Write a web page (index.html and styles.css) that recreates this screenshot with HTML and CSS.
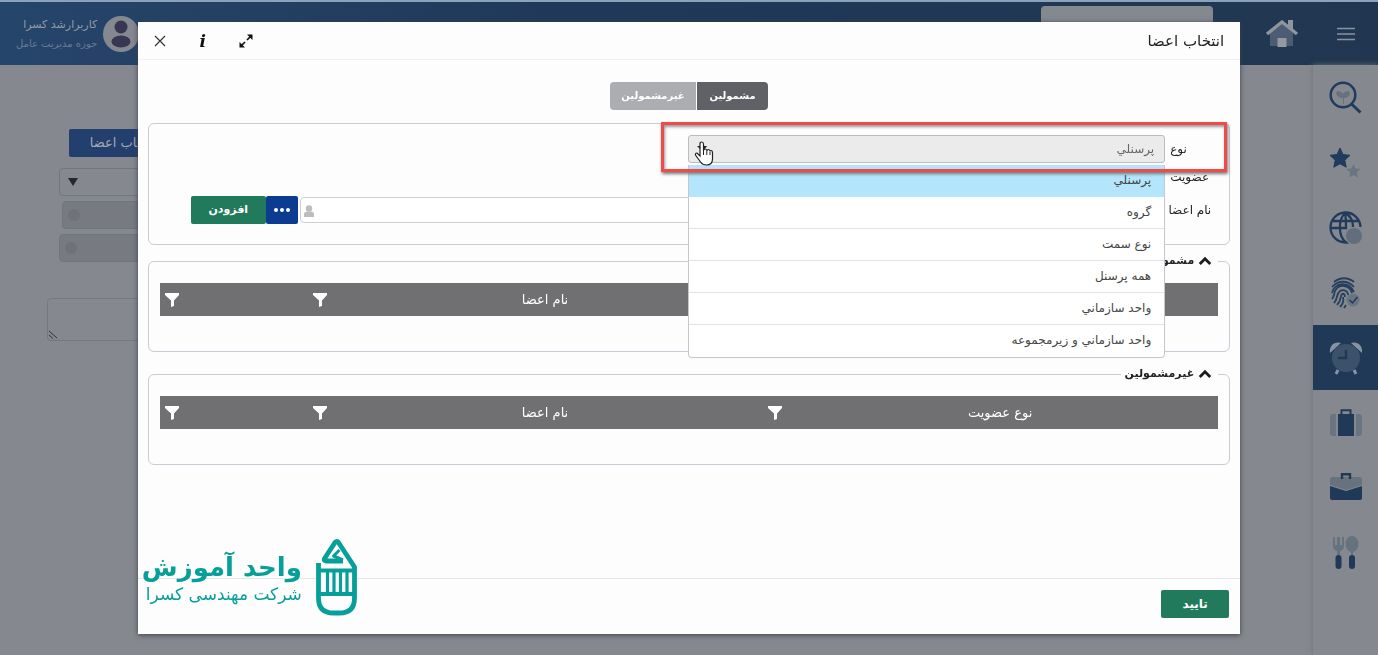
FILE: index.html
```html
<!DOCTYPE html>
<html lang="fa" dir="rtl">
<head>
<meta charset="utf-8">
<meta name="viewport" content="width=device-width, initial-scale=1">
<title>انتخاب اعضا</title>
<link rel="stylesheet" href="styles.css">
</head>
<body>
<svg class="defs" aria-hidden="true">
  <symbol id="filter" viewBox="0 0 14 14"><path d="M0 0h14v2L9 7.500V13l-3 1V7.500L0 2z" fill="#fff"/></symbol>
  <symbol id="chevron" viewBox="0 0 12 8"><path d="M1.500 6.500 6 2l4.500 4.500" fill="none" stroke="#1c1c1c" stroke-width="2.400"/></symbol>
</svg>

<div class="app">
  <header class="topbar">
    <button class="icon-button menu" aria-label="منو"><svg width="18" height="14" viewBox="0 0 18 14"><path d="M0 1.500h18M0 7h18M0 12.500h18" stroke="#8793a3" stroke-width="1.700"/></svg></button>
    <a class="home" href="#" aria-label="خانه"><svg width="34" height="28" viewBox="0 0 34 28"><path d="M5 13 17 4l11 9v13H5z" fill="#4c5d73"/><path d="M23 0h5v10l-5-4z" fill="#8e959d"/><path d="m2 14 15-12 15 12" fill="none" stroke="#8e959d" stroke-width="3.400"/><path d="M12.500 18h9v9h-9z" fill="#959a9e"/></svg></a>
    <input class="search" type="text" aria-label="جستجو">
    <div class="user">
      <svg width="36" height="38" viewBox="0 0 36 38"><circle cx="18" cy="19" r="18" fill="#85898f"/><circle cx="18" cy="12" r="6.500" fill="#393654"/><ellipse cx="18" cy="26.500" rx="9.500" ry="6" fill="#393654"/></svg>
      <div class="user-text"><span class="user-name">کاربرارشد کسرا</span><span class="user-role">حوزه مدیریت عامل</span></div>
    </div>
  </header>

  <div class="workspace">
    <nav class="sidebar">
      <a href="#" aria-label="جستجو"><svg width="34" height="34" viewBox="0 0 34 34"><path d="M14 23v-6C8 17 6 13 8 10c3 0 5 1 6 3 1-2 3-3 6-3 2 3 0 7-5 7v6z" fill="#66727e"/><circle cx="14" cy="14" r="12.300" fill="none" stroke="#213b5c" stroke-width="2.500"/><path d="m22.500 23 9 8.500" stroke="#213b5c" stroke-width="3"/></svg></a>
      <a href="#" aria-label="علاقه‌مندی‌ها"><svg width="34" height="34" viewBox="0 0 34 34"><path d="m11 2 3 6.500 7 .8-5.200 4.900 1.400 7L11 17.800l-6.200 3.400 1.400-7L1 9.300l7-.8z" fill="#213b5c" stroke="#213b5c"/><path d="m24.500 18 2 4.500 5 .6-3.700 3.500 1 5-4.300-2.500-4.300 2.500 1-5-3.700-3.500 5-.6z" fill="#697580"/></svg></a>
      <a href="#" aria-label="وب"><svg width="34" height="34" viewBox="0 0 34 34"><g fill="none" stroke="#213b5c" stroke-width="2.300"><path d="M31.500 16A15 15 0 1 0 17 31.500C9 25 9 9 16 2M2 17h15c0-6 0-11-1-15M4 10h26M16 2c6 3 8 8 8 14"/></g><circle cx="25" cy="25" r="8" fill="#626e7b"/></svg></a>
      <a href="#" aria-label="اثر انگشت"><svg width="34" height="34" viewBox="0 0 34 34"><g fill="none" stroke="#263f5c" stroke-width="1.800"><path d="M5 6C11 1 19 1 25 6M3 11C9 4 19 4 25 11M3 17c2-10 16-13 22-1M3 23c2-2 2-5 3-8 4-8 15-6 17 2M5 27c4-4 2-9 6-12 4-2 8 0 8 4M8 29c5-5 3-9 5-11 2-1 3 1 3 3M11 31c3-3 4-6 3-10M15 32l2-3"/></g><circle cx="24" cy="24" r="6.500" fill="#697580"/><path d="m20.500 24 3 3 5-6" fill="none" stroke="#213b5c" stroke-width="1.500"/></svg></a>
      <a href="#" class="active" aria-label="حضور و غیاب"><svg width="34" height="34" viewBox="0 0 34 34"><path d="M1 12C0 4 6 0 12 2zM33 12C34 4 28 0 22 2z" fill="#8793a0"/><circle cx="17" cy="17" r="14" fill="#3c526a"/><path d="M17 9v8H9" fill="none" stroke="#203852" stroke-width="2.300"/><path d="m9 29-2 4M25 29l2 4" stroke="#8793a0" stroke-width="3"/></svg></a>
      <a href="#" aria-label="مأموریت"><svg width="34" height="34" viewBox="0 0 34 34"><path d="M7 8v22H4a3 3 0 0 1-3-3V11a3 3 0 0 1 3-3zM27 8v22h3a3 3 0 0 0 3-3V11a3 3 0 0 0-3-3z" fill="#697681"/><path d="M9 8h16v22H9z" fill="#203957"/><path d="M12.500 9V4.200h9V9" fill="none" stroke="#203957" stroke-width="2"/></svg></a>
      <a href="#" aria-label="کیف"><svg width="34" height="34" viewBox="0 0 34 34"><path d="M1 14V9q0-3 3-3h26q3 0 3 3v5l-16 5z" fill="#66727e"/><path d="m1 15 16 5 16-5v12q0 2-2 2H3q-2 0-2-2z" fill="#203957"/><path d="M13 8V3.200h8V8" fill="none" stroke="#203957" stroke-width="2.400"/></svg></a>
      <a href="#" aria-label="غذا"><svg width="34" height="34" viewBox="0 0 34 34"><path d="M4 1v9q0 4 4 5v4h3v-4q4-1 4-5V1h-2v8h-2V1H8v8H6V1z" fill="#66727e"/><ellipse cx="23" cy="8" rx="6.500" ry="8" fill="#66727e"/><path d="M22 14h2v5h-2z" fill="#66727e"/><rect x="6.500" y="19" width="6" height="14" rx="3" fill="#203957"/><rect x="20" y="19" width="6" height="14" rx="3" fill="#203957"/></svg></a>
    </nav>
    <main class="page-form">
      <button class="page-button">انتخاب اعضا</button>
      <div class="page-select"><select aria-label="نوع"><option></option></select><svg width="10" height="8" viewBox="0 0 10 8"><path d="M0 0h10L5 8z" fill="#25272b"/></svg></div>
      <div class="page-lookup short"><input type="text" aria-label="از"><i></i></div>
      <div class="page-lookup"><input type="text" aria-label="تا"><i></i></div>
      <div class="page-notes"><textarea aria-label="توضیحات"></textarea><svg width="10" height="10" viewBox="0 0 10 10"><path d="m1 2 8 7M1 6l4 3.500" stroke="#30333a" stroke-width="1"/></svg></div>
    </main>
  </div>
</div>

<div class="overlay">
  <section class="dialog" role="dialog" aria-labelledby="dialog-title">
    <header class="dialog-head">
      <h1 id="dialog-title">انتخاب اعضا</h1>
      <div class="dialog-tools">
        <button class="icon-button" aria-label="بزرگنمایی"><svg width="14" height="14" viewBox="0 0 14 14"><path d="M8 0.500h5.500V6zM0.500 8v5.500H6z" fill="#111"/><path d="m8 6 4-4M6 8l-4 4" stroke="#111" stroke-width="1.700"/></svg></button>
        <button class="icon-button info" aria-label="راهنما">i</button>
        <button class="icon-button close" aria-label="بستن"><svg width="12" height="12" viewBox="0 0 12 12"><path d="m1 1 10 10M11 1 1 11" stroke="#333" stroke-width="1.200"/></svg></button>
      </div>
    </header>

    <div class="dialog-body">
      <div class="tabs" role="tablist">
        <button class="tab selected" role="tab" aria-selected="true">مشمولین</button>
        <button class="tab" role="tab" aria-selected="false">غیرمشمولین</button>
      </div>

      <div class="criteria">
        <label class="label" for="kind">نوع عضویت</label>
        <div class="kind-field">
          <select id="kind"><option>پرسنلي</option></select>
          <ul class="options" role="listbox">
            <li role="option" class="current">پرسنلي</li>
            <li role="option">گروه</li>
            <li role="option">نوع سمت</li>
            <li role="option">همه پرسنل</li>
            <li role="option">واحد سازماني</li>
            <li role="option">واحد سازماني و زيرمجموعه</li>
          </ul>
          <svg class="pointer" width="20" height="26" viewBox="0 0 20 26"><path d="M6 15V3q0-2 1.700-2T9.500 3v7q0-2 1.700-2t1.800 2q0-1.500 1.500-1.500T16 10.500q0-1 1.200-1T18.500 12v6q0 6-6 6-4 0-6-3l-5-7q-.5-2 1.500-2z" fill="#fff" stroke="#222" stroke-width="1.200"/><path d="M9.500 10v4M12.800 10v4M16 11v3" stroke="#222"/><path d="M3 5h3v3zM10 5h3l-3 4z" fill="#222"/></svg>
        </div>
        <label class="label" for="member">نام اعضا</label>
        <div class="member-field">
          <div class="member-input"><input id="member" type="text"><svg width="10" height="12" viewBox="0 0 10 12"><circle cx="5" cy="3.500" r="3.200" fill="#bdbdbd"/><path d="M0 12V9q0-2 3-2.500h4Q10 7 10 9v3z" fill="#bdbdbd"/></svg></div>
          <button class="more" aria-label="انتخاب"><svg width="16" height="4" viewBox="0 0 16 4"><circle cx="2" cy="2" r="2" fill="#fff"/><circle cx="8" cy="2" r="2" fill="#fff"/><circle cx="14" cy="2" r="2" fill="#fff"/></svg></button>
          <button class="add">افزودن</button>
        </div>
        <div class="highlight"></div>
      </div>

      <fieldset class="group">
        <legend><svg width="14" height="10"><use href="#chevron"/></svg>مشمولین</legend>
        <table>
          <thead><tr>
            <th class="wide"><div class="cell"><span>نوع عضويت</span><svg width="14" height="14"><use href="#filter"/></svg></div></th>
            <th class="wide"><div class="cell"><span>نام اعضا</span><svg width="14" height="14"><use href="#filter"/></svg></div></th>
            <th><div class="cell"><span></span><svg width="14" height="14"><use href="#filter"/></svg></div></th>
          </tr></thead>
        </table>
      </fieldset>

      <fieldset class="group">
        <legend><svg width="14" height="10"><use href="#chevron"/></svg>غیرمشمولین</legend>
        <table>
          <thead><tr>
            <th class="wide"><div class="cell"><span>نوع عضويت</span><svg width="14" height="14"><use href="#filter"/></svg></div></th>
            <th class="wide"><div class="cell"><span>نام اعضا</span><svg width="14" height="14"><use href="#filter"/></svg></div></th>
            <th><div class="cell"><span></span><svg width="14" height="14"><use href="#filter"/></svg></div></th>
          </tr></thead>
        </table>
      </fieldset>
    </div>

    <footer class="dialog-foot"><button class="confirm">تایید</button></footer>

    <div class="brand">
      <svg width="42" height="78" viewBox="0 0 42 78"><path d="M2.500 33H38v23H2.500z" fill="#fff"/><g fill="none" stroke="#069f99" stroke-linejoin="round"><path d="M2.500 25v35q0 15 15 15h6q15 0 15-15V29L22.500 4.500q-1.500-2-3.500 0L8.500 20.500Q7.500 23 10 23H27" stroke-width="4.800"/><path d="m23.500 12-6 6 9.500 4" stroke-width="3"/><path d="M3 32.500h36M3 56h36" stroke-width="4.200"/><path d="M11.500 33v22M18 33v22M24.500 33v22M31 33v22" stroke-width="3.200"/></g></svg>
      <div class="brand-text"><strong>واحد آموزش</strong><span>شرکت مهندسی کسرا</span></div>
    </div>
  </section>
</div>
</body>
</html>
```

FILE: styles.css
```css
* { box-sizing: border-box; }

body {
  margin: 0;
  background: #85898f;
  color: #222;
  font: 12px/20px "DejaVu Sans", sans-serif;
  overflow: hidden;
}

button, input, select, textarea { font: inherit; margin: 0; }
button { border: 0; cursor: pointer; padding: 0; }
svg { display: block; flex: none; }
.defs { position: absolute; width: 0; height: 0; }

.icon-button {
  display: grid;
  place-items: center;
  width: 20px;
  height: 20px;
  background: none;
}

/* Application behind the dialog */
.app { display: flex; flex-direction: column; height: 100vh; overflow: hidden; }

.topbar {
  display: flex;
  align-items: center;
  flex: none;
  height: 65px;
  padding: 0 22px 0 16px;
  border-top: 2px solid #8ba3ba;
  background: linear-gradient(to left, #213751, #20395a 60%, #26456b);
}
.home { margin-right: 37px; }
.search {
  align-self: flex-start;
  width: 172px;
  height: 40px;
  margin: 4px 52px 0 0;
  border: 0;
  border-radius: 4px;
  background: #83898e;
}
.user { display: flex; align-items: center; gap: 6px; margin-right: auto; }
.user-text { display: flex; flex-direction: column; }
.user-name { color: #929ca8; font-size: 11px; }
.user-role { color: #687c93; font-size: 10px; line-height: 18px; }

.workspace { display: flex; flex: 1; min-height: 0; }
.sidebar { flex: none; width: 65px; box-shadow: 0 0 5px #6e7279; }
.sidebar a { display: grid; place-items: center; height: 65px; }
.sidebar .active { background: #203957; }

.page-form {
  display: flex;
  flex-direction: column;
  align-items: flex-end;
  flex: 1;
  padding: 64px 0 0 59px;
}
.page-button {
  width: 108px;
  height: 28px;
  margin: 0 0 11px 10px;
  border-radius: 2px;
  background: #233f6d;
  color: #a2a9b5;
  font-size: 13px;
}
.page-select, .page-lookup { position: relative; width: 200px; height: 28px; margin-bottom: 5px; }
.page-select select, .page-lookup input {
  width: 100%;
  height: 28px;
  border: 1px solid #70767f;
  border-radius: 4px;
  background: #85898f;
  appearance: none;
}
.page-select svg { position: absolute; left: 9px; top: 10px; }
.page-lookup input { background: #777a81; }
.page-lookup.short { width: 197px; margin-left: 3px; }
.page-lookup i {
  position: absolute;
  left: 6px;
  top: 8px;
  width: 12px;
  height: 12px;
  border-radius: 50%;
  background: #6f7377;
}
.page-notes { position: relative; width: 212px; margin: 31px 0 0 -12px; }
.page-notes textarea {
  display: block;
  width: 100%;
  height: 43px;
  border: 1px solid #747981;
  border-radius: 4px;
  background: #85898f;
  resize: none;
}
.page-notes svg { position: absolute; left: 1px; bottom: 2px; }

/* Dialog */
.overlay { position: fixed; inset: 0; padding: 22px 10% 21px; }
.dialog {
  position: relative;
  display: flex;
  flex-direction: column;
  height: 100%;
  background: #fdfdfd;
  box-shadow: 0 1px 5px #3d4045;
}
.dialog-head {
  display: flex;
  align-items: center;
  justify-content: space-between;
  height: 38px;
  padding: 0 16px 0 12px;
  border-bottom: 1px solid #edf0f4;
}
.dialog-head h1 { margin: 0; font-size: 15px; font-weight: 400; }
.dialog-tools { display: flex; align-items: center; gap: 23px; }
.info { color: #111; font: italic 700 17px/20px "DejaVu Serif", serif; }

.dialog-body { flex: 1; padding: 22px 10px 0; }

.tabs { display: flex; justify-content: center; gap: 1px; margin-bottom: 13px; }
.tab { width: 86px; height: 28px; background: #acadb0; color: #fff; font-weight: 700; font-size: 10px; }
.tab:first-child { width: 71px; border-radius: 0 4px 4px 0; }
.tab:last-child { border-radius: 4px 0 0 4px; }
.tab.selected { background: #606067; }

.criteria {
  position: relative;
  display: grid;
  grid-template-columns: 46px 1fr;
  row-gap: 5px;
  padding: 11px 18px 20px 42px;
  border: 1px solid #c8ccd4;
  border-radius: 6px;
}
.label { padding-left: 5px; text-align: left; line-height: 28px; white-space: nowrap; }
.label[for="kind"] { white-space: normal; }

.kind-field { position: relative; width: 49%; }
.kind-field select {
  display: block;
  width: 100%;
  height: 28px;
  padding: 0 10px;
  border: 1px solid #bcbcbc;
  border-radius: 3px;
  background: #ebebeb;
  color: #666;
  appearance: none;
}
.options {
  position: absolute;
  z-index: 2;
  inset: 30px 0 auto;
  margin: 0;
  padding: 0;
  border: 1px solid #c4c8ce;
  border-top: 0;
  border-radius: 0 0 4px 4px;
  background: #fff;
  list-style: none;
}
.options li { height: 32px; padding: 5px 13px 6px; border-bottom: 1px solid #dfe3e9; color: #444; }
.options li:last-child { border-bottom: 0; }
.options .current { border-color: #b3e5fc; background: #b3e5fc; }
.pointer { position: absolute; z-index: 4; left: 6px; top: 6px; }

.member-field { display: flex; align-items: center; }
.member-input { position: relative; flex: 1; margin-left: 2px; }
.member-input input {
  display: block;
  width: 100%;
  height: 26px;
  border: 1px solid #ccd0d6;
  border-radius: 4px;
  background: #fff;
}
.member-input svg { position: absolute; left: 4px; top: 8px; }
.more { display: grid; place-items: center; width: 32px; height: 28px; border-radius: 2px; background: #0c3b92; }
.add, .confirm { border-radius: 2px; background: #217a5b; color: #fff; font-weight: 700; }
.add { width: 75px; height: 28px; font-size: 11px; }

.highlight {
  position: absolute;
  z-index: 3;
  inset: -2px 2px auto 47.4%;
  height: 50px;
  border: 3px solid #ef4b4b;
  box-shadow: 1px 2px 3px #777, inset 1px 2px 3px #999;
  pointer-events: none;
}

.group {
  min-width: 0;
  margin: 6px 0 0;
  padding: 12px 11px 35px;
  border: 1px solid #c8ccd4;
  border-radius: 6px;
}
.group + .group { margin-top: 12px; }
.group legend {
  display: flex;
  align-items: center;
  gap: 4px;
  padding: 0 6px 0 4px;
  margin-right: 0;
  font-size: 11px;
  font-weight: 700;
}
table { width: 100%; border-collapse: collapse; table-layout: fixed; background: #707072; }
th { height: 33px; padding: 0 0 0 5px; color: #fff; font-size: 13px; font-weight: 400; }
.wide { width: 43%; }
.cell { display: flex; align-items: center; }
.cell span { flex: 1; text-align: center; }

.dialog-foot { padding: 11px; border-top: 1px solid #e6e6ea; }
.confirm { display: block; width: 68px; height: 28px; margin-bottom: 5px; }

.brand { position: absolute; left: 4px; bottom: 18px; display: flex; align-items: center; gap: 14px; color: #069f99; }
.brand-text { display: flex; flex-direction: column; }
.brand strong { font-size: 26px; line-height: 34px; }
.brand span { font-size: 17px; line-height: 20px; }
```
